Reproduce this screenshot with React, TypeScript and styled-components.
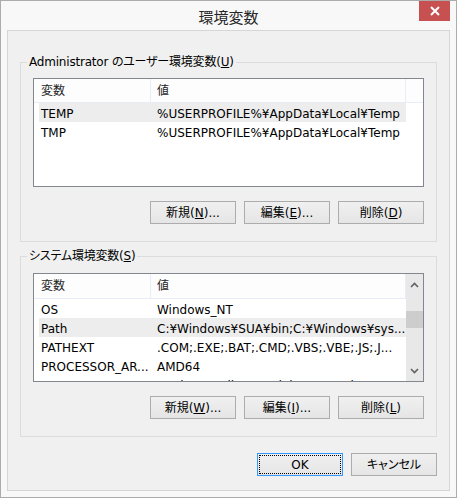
import React from "react";
import styled, { createGlobalStyle, css } from "styled-components";

const Global = createGlobalStyle`
  html, body { margin: 0; padding: 0; background: #ffffff; }
  body {
    font-family: "DejaVu Sans", "Noto Sans CJK JP", sans-serif;
    font-size: 12px;
    font-feature-settings: "palt";
    color: #000;
  }
  * { box-sizing: border-box; }
`;

const Window = styled.div`
  width: 457px;
  height: 498px;
  border: 1px solid #acacac;
  background: #f8f8f8;
  display: flex;
  flex-direction: column;
  padding: 0 6px 6px;
`;

const TitleBar = styled.div`
  height: 29px;
  display: grid;
  grid-template-columns: 1fr auto 1fr;
  align-items: start;
`;

const Title = styled.div`
  grid-column: 2;
  padding-top: 7px;
  font-family: "Noto Sans CJK JP", sans-serif;
  font-feature-settings: normal;
  font-size: 15px;
  line-height: 18px;
  color: #262626;
`;

const CloseButton = styled.div`
  grid-column: 3;
  justify-self: end;
  width: 31px;
  height: 20px;
  background: #c75050;
  display: flex;
  align-items: center;
  justify-content: center;
`;

const Client = styled.div`
  flex: 1;
  border: 1px solid #d6d6d6;
  background: #f0f0f0;
  display: flex;
  flex-direction: column;
  padding: 0 12px 14px;
`;

const Group = styled.fieldset<{ $top: number; $pad: number }>`
  margin: ${(p) => p.$top}px 0 0;
  padding: ${(p) => p.$pad}px 12px 17px;
  border: 1px solid #dcdcdc;
  min-width: 0;
`;

const Legend = styled.legend`
  padding: 0 2px;
  margin-left: -6px;
  line-height: 16px;
  font-size: 12px;
  letter-spacing: -0.2px;
`;

const ListBox = styled.div`
  height: 109px;
  border: 1px solid #828790;
  background: #ffffff;
  display: flex;
  overflow: hidden;
`;

const ListMain = styled.div`
  flex: 1;
  min-width: 0;
  display: flex;
  flex-direction: column;
  overflow: hidden;
`;

const Header = styled.div<{ $h: number }>`
  flex: none;
  height: ${(p) => p.$h}px;
  display: grid;
  grid-template-columns: 117px 255px 1fr;
  border-bottom: 1px solid #e6edf6;
  background: #fdfdfd;
`;

const HeaderCell = styled.div<{ $pad: number; $last?: boolean }>`
  padding-left: ${(p) => p.$pad}px;
  padding-top: 1px;
  line-height: 22px;
  color: #1f1f1f;
  ${(p) =>
    !p.$last &&
    css`
      border-right: 1px solid #e6edf6;
    `}
`;

const Row = styled.div<{ $selected?: boolean }>`
  flex: none;
  margin-left: 5px;
  width: 367px;
  height: 19px;
  display: grid;
  grid-template-columns: 112px 1fr;
  background: ${(p) => (p.$selected ? "#ededed" : "transparent")};
`;

const Cell = styled.div<{ $pad: number }>`
  padding-left: ${(p) => p.$pad}px;
  padding-top: 3px;
  line-height: 16px;
  white-space: nowrap;
  overflow: hidden;
`;

const ScrollBar = styled.div`
  flex: none;
  width: 17px;
  background: #e8e8e8;
  display: flex;
  flex-direction: column;
`;

const ArrowBox = styled.div<{ $h: number }>`
  height: ${(p) => p.$h}px;
  display: flex;
  align-items: center;
  justify-content: center;
`;

const Thumb = styled.div`
  margin-top: 16px;
  height: 17px;
  background: #cdcdcd;
`;

const Spacer = styled.div`
  flex: 1;
`;

const ButtonRow = styled.div<{ $top: number }>`
  display: flex;
  justify-content: flex-end;
  gap: 8px;
  margin-top: ${(p) => p.$top}px;
`;

const Button = styled.button<{ $default?: boolean }>`
  width: 86px;
  height: 23px;
  padding: 0;
  border: 1px solid #acacac;
  background: linear-gradient(#f0f0f0, #e5e5e5);
  font-family: "DejaVu Sans", "Noto Sans CJK JP", sans-serif;
  font-feature-settings: "palt";
  font-size: 12px;
  color: #000;
  line-height: 20px;
  ${(p) =>
    p.$default &&
    css`
      border-color: #3399ff;
      outline: 1px dotted #000;
      outline-offset: -3px;
    `}
`;

const Key = styled.span`
  text-decoration: underline;
`;

const Chevron = ({ up }: { up?: boolean }) => (
  <svg width="9" height="6" viewBox="0 0 9 6">
    <polyline
      points={up ? "1,5 4.5,1.5 8,5" : "1,1 4.5,4.5 8,1"}
      fill="none"
      stroke="#606060"
      strokeWidth="1.6"
    />
  </svg>
);

type Item = { name: string; value: string; selected?: boolean };

const userVars: Item[] = [
  { name: "TEMP", value: "%USERPROFILE%¥AppData¥Local¥Temp", selected: true },
  { name: "TMP", value: "%USERPROFILE%¥AppData¥Local¥Temp" },
];

const sysVars: Item[] = [
  { name: "OS", value: "Windows_NT" },
  { name: "Path", value: "C:¥Windows¥SUA¥bin;C:¥Windows¥sys...", selected: true },
  { name: "PATHEXT", value: ".COM;.EXE;.BAT;.CMD;.VBS;.VBE;.JS;.J..." },
  { name: "PROCESSOR_AR...", value: "AMD64" },
  { name: "PROCESSOR_ID...", value: "Intel64 Family 6 Model 58 Stepping 9, G..." },
];

const VarList = ({
  items,
  scroll,
  headerH,
}: {
  items: Item[];
  scroll?: boolean;
  headerH: number;
}) => (
  <ListBox>
    <ListMain>
      <Header $h={headerH}>
        <HeaderCell $pad={7}>変数</HeaderCell>
        <HeaderCell $pad={6}>値</HeaderCell>
        {!scroll && <HeaderCell $pad={0} $last />}
      </Header>
      {items.map((it) => (
        <Row key={it.name} $selected={it.selected}>
          <Cell $pad={2}>{it.name}</Cell>
          <Cell $pad={6}>{it.value}</Cell>
        </Row>
      ))}
    </ListMain>
    {scroll && (
      <ScrollBar>
        <ArrowBox $h={21}>
          <Chevron up />
        </ArrowBox>
        <Thumb />
        <Spacer />
        <ArrowBox $h={20}>
          <Chevron />
        </ArrowBox>
      </ScrollBar>
    )}
  </ListBox>
);

export default function App() {
  return (
    <>
      <Global />
      <Window>
        <TitleBar>
          <Title>環境変数</Title>
          <CloseButton>
            <svg width="10" height="10" viewBox="0 0 10 10">
              <path d="M1 1 L9 9 M9 1 L1 9" stroke="#fff" strokeWidth="2" />
            </svg>
          </CloseButton>
        </TitleBar>
        <Client>
          <Group $top={23} $pad={8}>
            <Legend>
              Administrator のユーザー環境変数(<Key>U</Key>)
            </Legend>
            <VarList items={userVars} headerH={24} />
            <ButtonRow $top={14}>
              <Button>
                新規(<Key>N</Key>)...
              </Button>
              <Button>
                編集(<Key>E</Key>)...
              </Button>
              <Button>
                削除(<Key>D</Key>)
              </Button>
            </ButtonRow>
          </Group>
          <Group $top={6} $pad={9}>
            <Legend>
              システム環境変数(<Key>S</Key>)
            </Legend>
            <VarList items={sysVars} scroll headerH={25} />
            <ButtonRow $top={14}>
              <Button>
                新規(<Key>W</Key>)...
              </Button>
              <Button>
                編集(<Key>I</Key>)...
              </Button>
              <Button>
                削除(<Key>L</Key>)
              </Button>
            </ButtonRow>
          </Group>
          <ButtonRow $top={16}>
            <Button $default>OK</Button>
            <Button>キャンセル</Button>
          </ButtonRow>
        </Client>
      </Window>
    </>
  );
}
